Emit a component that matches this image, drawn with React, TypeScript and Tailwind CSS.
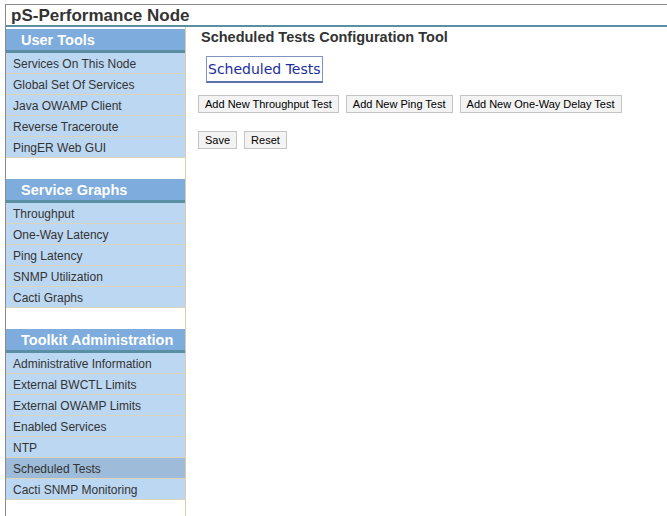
import React from 'react';

const SECTIONS = [
  {
    title: 'User Tools',
    items: ['Services On This Node', 'Global Set Of Services', 'Java OWAMP Client', 'Reverse Traceroute', 'PingER Web GUI'],
  },
  {
    title: 'Service Graphs',
    items: ['Throughput', 'One-Way Latency', 'Ping Latency', 'SNMP Utilization', 'Cacti Graphs'],
  },
  {
    title: 'Toolkit Administration',
    items: [
      'Administrative Information',
      'External BWCTL Limits',
      'External OWAMP Limits',
      'Enabled Services',
      'NTP',
      'Scheduled Tests',
      'Cacti SNMP Monitoring',
    ],
  },
];

const ACTIVE = 'Scheduled Tests';

const Btn: React.FC<{ label: string }> = ({ label }) => (
  <button className="h-[18px] px-[6px] bg-[#f3f3f3] border border-[#c4c4c4] text-[11px] leading-[16px] text-black">
    {label}
  </button>
);

const App: React.FC = () => {
  return (
    <div
      className="w-[667px] h-[516px] bg-white pt-[4px] pl-[5px] overflow-hidden"
      style={{ fontFamily: '"Liberation Sans", Arial, sans-serif' }}
    >
      <div className="h-full border-t border-l border-[#8a8a8a] flex flex-col">
        {/* page title */}
        <div className="h-[22px] border-b-[2px] border-[#5a8fa3] pl-[5px] pt-[1px] text-[17px] leading-[19px] font-bold text-[#333]">
          pS-Performance Node
        </div>

        <div className="flex flex-1">
          {/* left nav */}
          <div className="w-[180px] border-r border-[#d6cfae] pt-[2px] flex flex-col gap-[21px]">
            {SECTIONS.map(sec => (
              <div key={sec.title}>
                <div className="h-[24px] bg-[#7eacdc] border-b-[3px] border-[#5a8fa3] pl-[15px] pt-[1px] text-[14.5px] leading-[20px] font-bold text-white">
                  {sec.title}
                </div>
                {sec.items.map(item => (
                  <div
                    key={item}
                    className={`h-[21px] border-b border-[#d9d4bb] pl-[7px] pt-[2px] text-[12px] leading-[18px] text-[#333] ${
                      item === ACTIVE ? 'bg-[#9ebbd9]' : 'bg-[#bcd7f1]'
                    }`}
                  >
                    {item}
                  </div>
                ))}
              </div>
            ))}
          </div>

          {/* main */}
          <div className="flex-1 pt-[2px]">
            <h1 className="ml-[15px] text-[14.5px] leading-[16px] font-bold text-[#333]">
              Scheduled Tests Configuration Tool
            </h1>
            <div className="ml-[20px] mt-[11px] w-fit border border-[#7f95c6] border-b-[2px] border-b-[#5b72ad] px-[1px] h-[27px]">
              <span
                className="text-[14px] leading-[24px] text-[#1a2f9c]"
                style={{ fontFamily: '"DejaVu Sans", sans-serif' }}
              >
                Scheduled Tests
              </span>
            </div>
            <div className="ml-[12px] mt-[12px] flex gap-[7px]">
              <Btn label="Add New Throughput Test" />
              <Btn label="Add New Ping Test" />
              <Btn label="Add New One-Way Delay Test" />
            </div>
            <div className="ml-[12px] mt-[18px] flex gap-[7px]">
              <Btn label="Save" />
              <Btn label="Reset" />
            </div>
          </div>
        </div>
      </div>
    </div>
  );
};

export default App;
